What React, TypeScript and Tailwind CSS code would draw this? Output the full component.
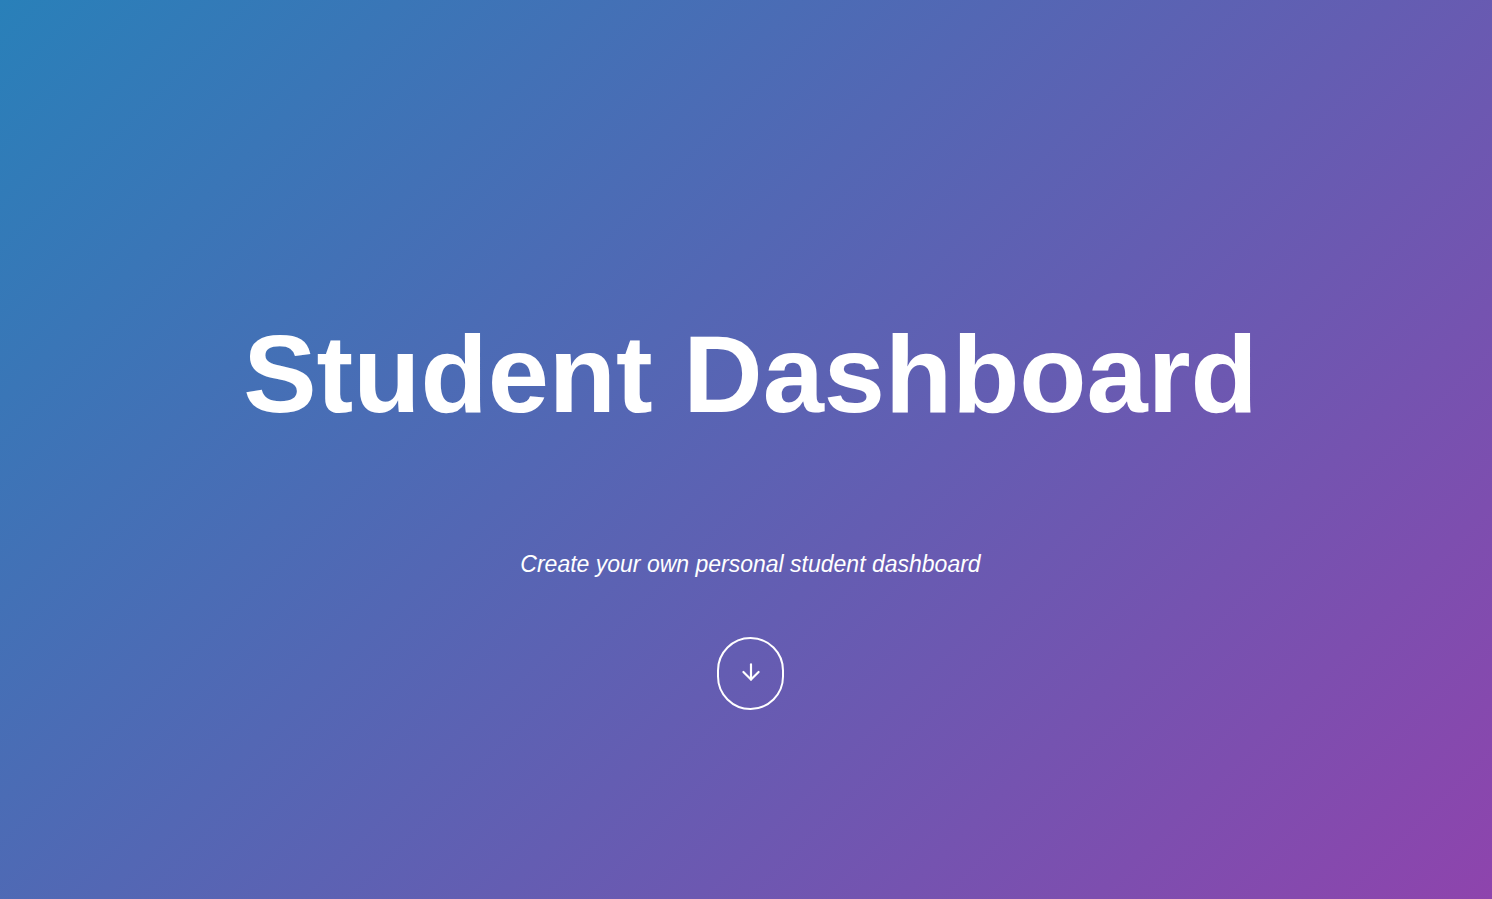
import React from 'react'
import { ArrowDown } from 'lucide-react'

const Hero = () => {
  return (
    <div className="h-[899px] w-full flex flex-col items-center pt-[319px] pl-[9px] bg-[linear-gradient(135deg,#2980b9,#8e44ad)] text-white font-['Liberation_Sans',Arial,sans-serif]">
      <h1 className="text-[110px] leading-none font-bold">Student Dashboard</h1>
      <p className="mt-[124px] text-[23px] leading-none italic">Create your own personal student dashboard</p>
      <button className="mt-[61px] w-[67px] h-[73px] rounded-full border-2 border-white flex items-center justify-center">
        <ArrowDown size={26} strokeWidth={2} className="-mt-1" />
      </button>
    </div>
  )
}

export default function App() {
  return <Hero />
}
